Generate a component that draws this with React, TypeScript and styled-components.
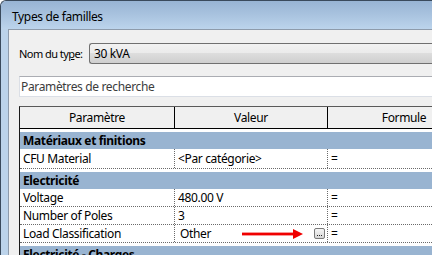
import React from 'react';
import styled, { createGlobalStyle } from 'styled-components';

const GlobalStyle = createGlobalStyle`
  html, body {
    margin: 0;
    padding: 0;
    background: #ffffff;
    overflow: hidden;
  }
  body {
    font-family: 'Noto Sans', 'Open Sans', sans-serif;
    font-size: 12px;
    letter-spacing: -0.35px;
    color: #000;
  }
`;

interface Param {
  name: string;
  value: string;
  tall?: boolean;
  picker?: boolean;
  indent?: boolean;
}

interface Group {
  title: string;
  params: Param[];
}

const groups: Group[] = [
  {
    title: 'Matériaux et finitions',
    params: [{ name: 'CFU Material', value: '<Par catégorie>', tall: true }],
  },
  {
    title: 'Electricité',
    params: [
      { name: 'Voltage', value: '480.00 V' },
      { name: 'Number of Poles', value: '3' },
      { name: 'Load Classification', value: 'Other', picker: true, indent: true },
    ],
  },
  {
    title: 'Electricité - Charges',
    params: [{ name: 'Apparent Load', value: '0.00 VA' }],
  },
];

const Arrow = () => (
  <svg width="62" height="10" viewBox="0 0 62 10">
    <rect x="0" y="3.6" width="53" height="2.8" fill="#f00000" />
    <polygon points="51,0 61,5 51,10" fill="#f00000" />
  </svg>
);

const App: React.FC = () => {
  return (
    <>
      <GlobalStyle />
      <Window>
        <TitleBar>Types de familles</TitleBar>
        <Client>
          <TypeRow>
            <Label>
              Nom du ty<u>p</u>e:
            </Label>
            <Combo>30 kVA</Combo>
          </TypeRow>
          <Search>Paramètres de recherche</Search>
          <Table>
            <HeaderRow>
              <HeadCell>Paramètre</HeadCell>
              <HeadCell>Valeur</HeadCell>
              <HeadCell $last>Formule</HeadCell>
            </HeaderRow>
            {groups.map((g) => (
              <React.Fragment key={g.title}>
                <GroupRow>
                  <GroupBand>{g.title}</GroupBand>
                </GroupRow>
                {g.params.map((p) => (
                  <DataRow key={p.name} $tall={p.tall}>
                    <Cell>{p.name}</Cell>
                    <Cell $indent={p.indent}>
                      {p.value}
                      {p.picker && (
                        <PickerWrap>
                          <Arrow />
                          <DotsButton>
                            <Dot />
                            <Dot />
                            <Dot />
                          </DotsButton>
                        </PickerWrap>
                      )}
                    </Cell>
                    <Cell $last>=</Cell>
                  </DataRow>
                ))}
              </React.Fragment>
            ))}
          </Table>
        </Client>
      </Window>
    </>
  );
};

export default App;

const Window = styled.div`
  width: 480px;
  height: 255px;
  box-sizing: border-box;
  background: #bcd3ea;
  border-left: 1px solid #3a4a5c;
  border-top: 1px solid #3a4a5c;
  border-top-left-radius: 6px;
  display: flex;
  flex-direction: column;
  overflow: hidden;
`;

const TitleBar = styled.div`
  height: 28px;
  flex-shrink: 0;
  box-sizing: border-box;
  padding: 8px 0 0 11px;
  background: linear-gradient(to bottom, #98b4d4 0%, #a9c3df 50%, #bcd4ec 100%);
  border-top-left-radius: 5px;
  line-height: 16px;
`;

const Client = styled.div`
  flex: 1;
  margin-left: 7px;
  border-left: 1px solid #8e9bab;
  border-top: 1px solid #8e9bab;
  background: #f0f0f0;
  padding: 13px 0 0 10px;
  display: flex;
  flex-direction: column;
  overflow: hidden;
`;

const TypeRow = styled.div`
  display: flex;
  align-items: center;
  height: 21px;
`;

const Label = styled.div`
  width: 70px;
  flex-shrink: 0;
  white-space: nowrap;
  overflow: hidden;
  font-size: 11px;
  letter-spacing: -0.55px;
  u {
    text-decoration-thickness: 1px;
  }
`;

const Combo = styled.div`
  flex: 1;
  height: 21px;
  box-sizing: border-box;
  border: 1px solid #707070;
  border-right: none;
  border-radius: 3px 0 0 3px;
  background: linear-gradient(to bottom, #f2f2f2 0%, #ebebeb 45%, #dddddd 50%, #cfcfcf 100%);
  padding-left: 4px;
  line-height: 19px;
`;

const Search = styled.div`
  margin-top: 12px;
  height: 21px;
  box-sizing: border-box;
  background: #ffffff;
  border: 1px solid #dbdfe6;
  border-top-color: #abadb3;
  border-right: none;
  padding-left: 1px;
  line-height: 19px;
  color: #3c3c3c;
`;

const Table = styled.div`
  margin-top: 9px;
  background: #ffffff;
  border-left: 1px solid #1a1a1a;
  border-top: 1px solid #5a5a5a;
`;

const columns = '155px 153px 1fr';

const HeaderRow = styled.div`
  display: grid;
  grid-template-columns: ${columns};
  height: 21px;
  background: #f0f0f0;
  border-bottom: 1px solid #000;
`;

const HeadCell = styled.div<{ $last?: boolean }>`
  text-align: center;
  line-height: 21px;
  border-right: ${(p) => (p.$last ? 'none' : '1px solid #000')};
  white-space: nowrap;
`;

const GroupRow = styled.div`
  padding-top: 3px;
`;

const GroupBand = styled.div`
  height: 17px;
  background: #99b4d1;
  font-weight: bold;
  padding-left: 3px;
  line-height: 17px;
  white-space: nowrap;
`;

const DataRow = styled.div<{ $tall?: boolean }>`
  display: grid;
  grid-template-columns: ${columns};
  height: ${(p) => (p.$tall ? '19px' : '17px')};
  border-bottom: 1px dotted #6a6a6a;
`;

const Cell = styled.div<{ $last?: boolean; $indent?: boolean }>`
  display: flex;
  align-items: center;
  padding-left: ${(p) => (p.$indent ? '5px' : '3px')};
  border-right: ${(p) => (p.$last ? 'none' : '1px dotted #6a6a6a')};
  white-space: nowrap;
  overflow: hidden;
`;

const PickerWrap = styled.div`
  margin-left: auto;
  display: flex;
  align-items: center;
  gap: 10px;
  padding-right: 2px;
`;

const DotsButton = styled.div`
  width: 11px;
  height: 11px;
  box-sizing: border-box;
  border: 1px solid #7a7a7a;
  border-radius: 2px;
  background: linear-gradient(to bottom, #f6f6f6, #d6d6d6);
  display: flex;
  align-items: flex-end;
  justify-content: center;
  gap: 1px;
  padding-bottom: 2px;
`;

const Dot = styled.span`
  width: 1px;
  height: 1px;
  background: #222;
`;
